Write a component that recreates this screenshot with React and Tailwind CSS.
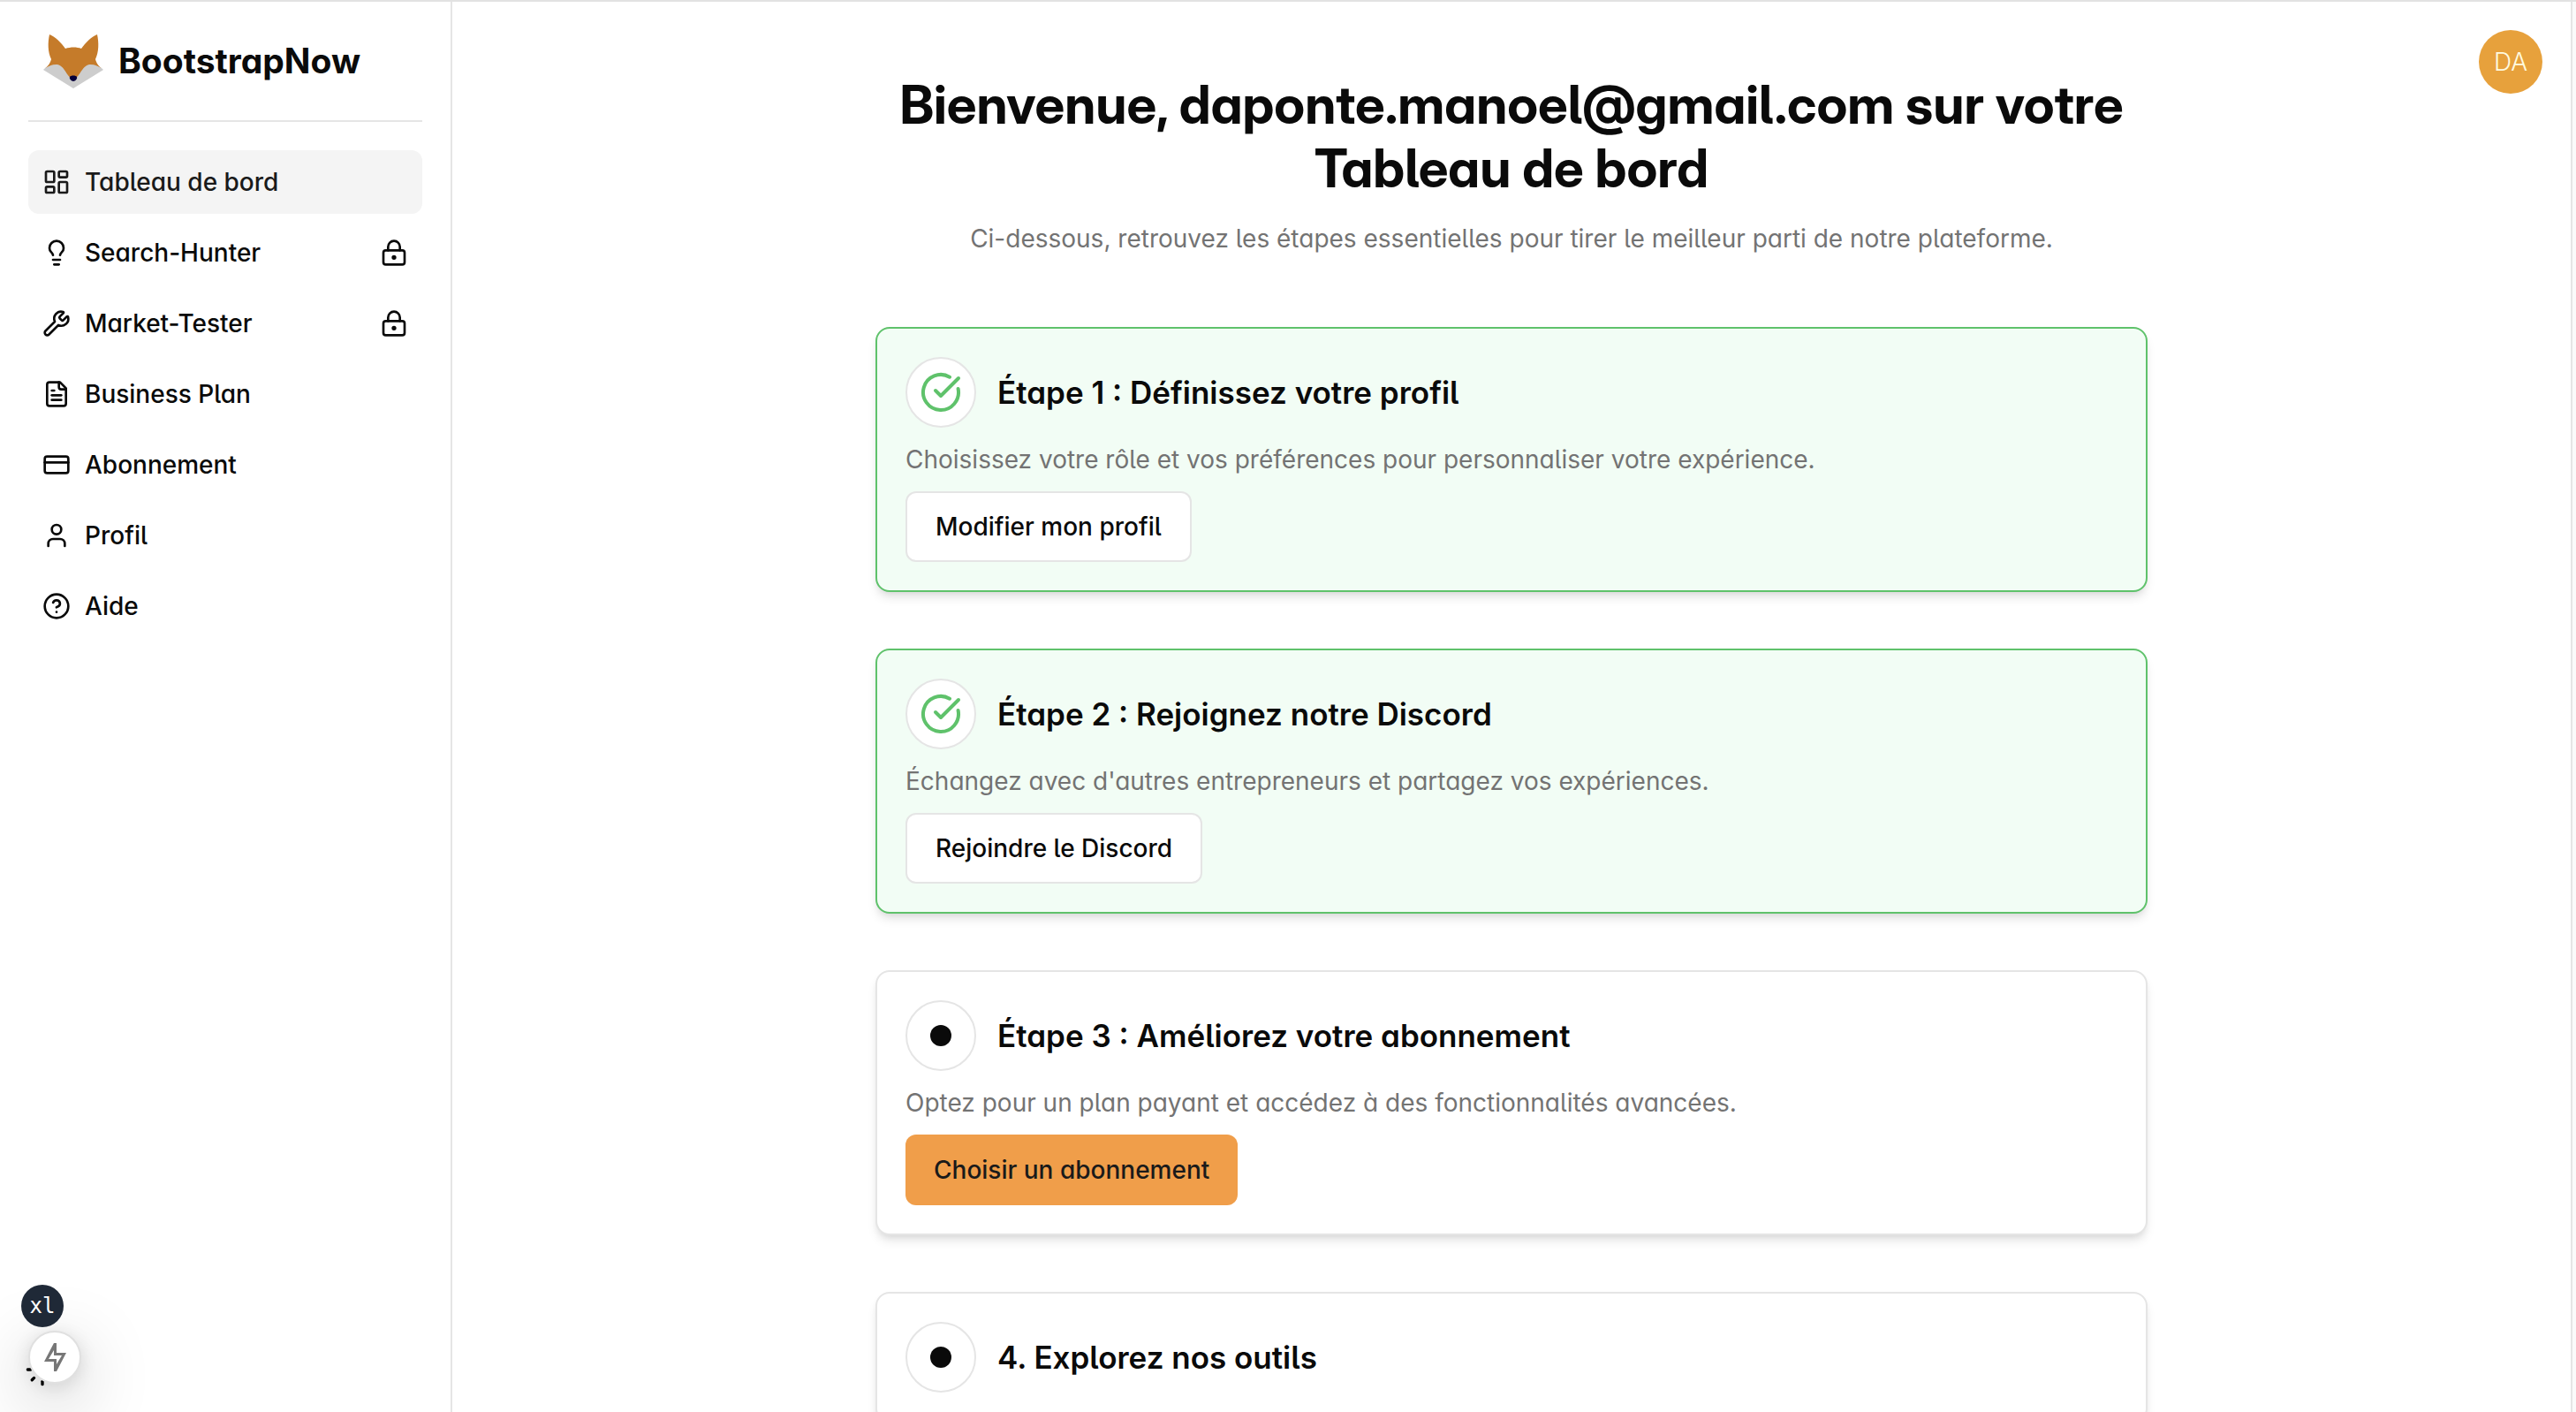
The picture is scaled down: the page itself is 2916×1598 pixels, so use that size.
import {
  CircleCheckBig,
  CircleQuestionMark,
  CreditCard,
  LayoutDashboard,
  Lightbulb,
  LockKeyhole,
  Sun,
  User,
  Wrench,
} from "lucide-react";

function FoxLogo() {
  return (
    <svg viewBox="-1 0 70 61" className="h-[61px] w-[70px] shrink-0" aria-hidden="true">
      <path d="M0 40C4 36 9 33.500 15 33.500C26 33.500 27 47 34 47C41 47 42 33.500 53 33.500C59 33.500 64 36 68 40L34 61Z" fill="#cdcdcd" />
      <path
        d="M7 0C14 3 20 9 25 16C31 14 38 14 43 16C48 9 54 3 61 0C63 9 63 20 59 28C60 33 64 37 67 39C61 35 57 33.500 52 34C43 36 41 50 34 50C27 50 25 36 16 34C11 33.500 7 35 1 39C4 37 8 33 9 28C5 20 5 9 7 0Z"
        fill="#c57b2a"
      />
      <path d="M30 48C31 46 37 46 38 48C39 50 36 53 34 53C32 53 29 50 30 48Z" fill="#06003a" />
    </svg>
  );
}

function FileIcon({ className }) {
  return (
    <svg viewBox="0 0 24 24" className={className} fill="none" stroke="currentColor" strokeWidth="2" strokeLinecap="round" strokeLinejoin="round" aria-hidden="true">
      <path d="M15 2H6a2 2 0 0 0-2 2v16a2 2 0 0 0 2 2h12a2 2 0 0 0 2-2V7Z" />
      <path d="M14 2v4a2 2 0 0 0 2 2h4" />
      <path d="M10 9H8" />
      <path d="M16 13H8" />
      <path d="M16 17H8" />
    </svg>
  );
}

const links = [
  { label: "Tableau de bord", Icon: LayoutDashboard, active: true },
  { label: "Search-Hunter", Icon: Lightbulb, locked: true },
  { label: "Market-Tester", Icon: Wrench, locked: true },
  { label: "Business Plan", Icon: FileIcon },
  { label: "Abonnement", Icon: CreditCard },
  { label: "Profil", Icon: User },
  { label: "Aide", Icon: CircleQuestionMark },
];

const steps = [
  {
    title: "Étape 1 : Définissez votre profil",
    text: "Choisissez votre rôle et vos préférences pour personnaliser votre expérience.",
    action: "Modifier mon profil",
    done: true,
  },
  {
    title: "Étape 2 : Rejoignez notre Discord",
    text: "Échangez avec d'autres entrepreneurs et partagez vos expériences.",
    action: "Rejoindre le Discord",
    done: true,
  },
  {
    title: "Étape 3 : Améliorez votre abonnement",
    text: "Optez pour un plan payant et accédez à des fonctionnalités avancées.",
    action: "Choisir un abonnement",
  },
  { title: "4. Explorez nos outils" },
];

function Sidebar() {
  return (
    <aside className="flex w-[512px] shrink-0 flex-col border-r-2 border-[#e5e5e5] px-8">
      <a href="#" className="flex h-[136px] items-center gap-4 border-b-2 border-[#e5e5e5] pl-4">
        <FoxLogo />
        <span className="text-[39px] leading-[56px] font-bold">BootstrapNow</span>
      </a>
      <nav className="mt-8 flex flex-col gap-2">
        {links.map(({ label, Icon, active, locked }) => (
          <a
            key={label}
            href="#"
            className={
              active
                ? "flex items-center gap-4 rounded-xl bg-[#f4f4f4] p-4 text-[28px] leading-10 font-medium text-[#1a1a1a]"
                : "flex items-center gap-4 rounded-xl p-4 text-[28px] leading-10 font-medium"
            }
          >
            <Icon className="size-8 shrink-0" />
            <span className="flex-1">{label}</span>
            {locked && <LockKeyhole className="size-8 shrink-0" />}
          </a>
        ))}
      </nav>
    </aside>
  );
}

function StepCard({ title, text, action, done }) {
  return (
    <section
      className={
        done
          ? "rounded-2xl border-2 border-[#5fc26b] bg-[#f2fdf5] p-8 shadow-[0_8px_12px_-2px_rgba(0,0,0,0.1),0_4px_8px_-4px_rgba(0,0,0,0.1)]"
          : "rounded-2xl border-2 border-[#e5e5e5] bg-white p-8 shadow-[0_8px_12px_-2px_rgba(0,0,0,0.1),0_4px_8px_-4px_rgba(0,0,0,0.1)]"
      }
    >
      <div className="flex items-center gap-6">
        <div className="flex size-20 shrink-0 items-center justify-center rounded-full border-2 border-[#e5e5e5] bg-white">
          {done ? <CircleCheckBig className="size-12 text-[#5fc26b]" /> : <span className="size-6 rounded-full bg-[#0a0a0a]" />}
        </div>
        <h2 className="text-[35px] leading-[56px] font-semibold">{title}</h2>
      </div>
      {text && <p className="mt-4 text-[28px] leading-10 text-[#737373]">{text}</p>}
      {action && (
        <button
          type="button"
          className={
            done
              ? "mt-4 h-20 rounded-xl border-2 border-[#e5e5e5] bg-white px-8 text-[28px] leading-10 font-medium"
              : "mt-4 h-20 rounded-xl bg-[#f09e4a] px-8 text-[28px] leading-10 font-medium text-[#1a1a1a]"
          }
        >
          {action}
        </button>
      )}
    </section>
  );
}

export default function App() {
  return (
    <div className="relative flex h-screen overflow-hidden border-t-2 border-[#e2e2e2] bg-[#fafafa] pr-1 font-['Inter',sans-serif] text-[#0a0a0a] [font-feature-settings:'cv11','cv05']">
      <div className="flex min-w-0 flex-1 border-r-2 border-[#e5e5e5] bg-white">
        <Sidebar />
        <main className="relative min-w-0 flex-1 overflow-hidden">
          <button
            type="button"
            className="absolute top-8 right-8 flex size-[72px] items-center justify-center rounded-full bg-[#e7a13c] text-[28px] font-light text-[#fffbe0]"
          >
            DA
          </button>
          <div className="mx-auto flex max-w-[1440px] flex-col gap-16 pt-20">
            <header className="mb-4 text-center">
              <h1 className="font-['Inter_Display','Inter',sans-serif] text-[60px] leading-[72px] font-bold">
                Bienvenue, daponte.manoel@gmail.com sur votre Tableau de bord
              </h1>
              <p className="mt-6 text-[28px] leading-10 text-[#737373]">
                Ci-dessous, retrouvez les étapes essentielles pour tirer le meilleur parti de notre plateforme.
              </p>
            </header>
            {steps.map((step) => (
              <StepCard key={step.title} {...step} />
            ))}
          </div>
        </main>
      </div>

      <button type="button" aria-label="Thème" className="absolute bottom-7 left-7 text-black">
        <Sun className="size-10" />
      </button>
      <button
        type="button"
        aria-label="Compilation"
        className="absolute bottom-8 left-8 flex size-[60px] items-center justify-center rounded-full border-2 border-[#e0e0e0] bg-white shadow-[0_22px_80px_rgba(0,0,0,0.25),0_4px_20px_rgba(0,0,0,0.12)]"
      >
        <svg viewBox="0 0 25 32" className="h-8 w-[25px]" aria-hidden="true">
          <path d="M11 0H14V11H25L14 32H11V21H0ZM11 8L5 18H14V24L20 14H11Z" fill="#777" fillRule="evenodd" />
        </svg>
      </button>
      <div className="absolute bottom-24 left-6 flex size-12 items-center justify-center rounded-full bg-[#1f2937] font-['DejaVu_Sans_Mono',monospace] text-2xl text-white">
        xl
      </div>
    </div>
  );
}
